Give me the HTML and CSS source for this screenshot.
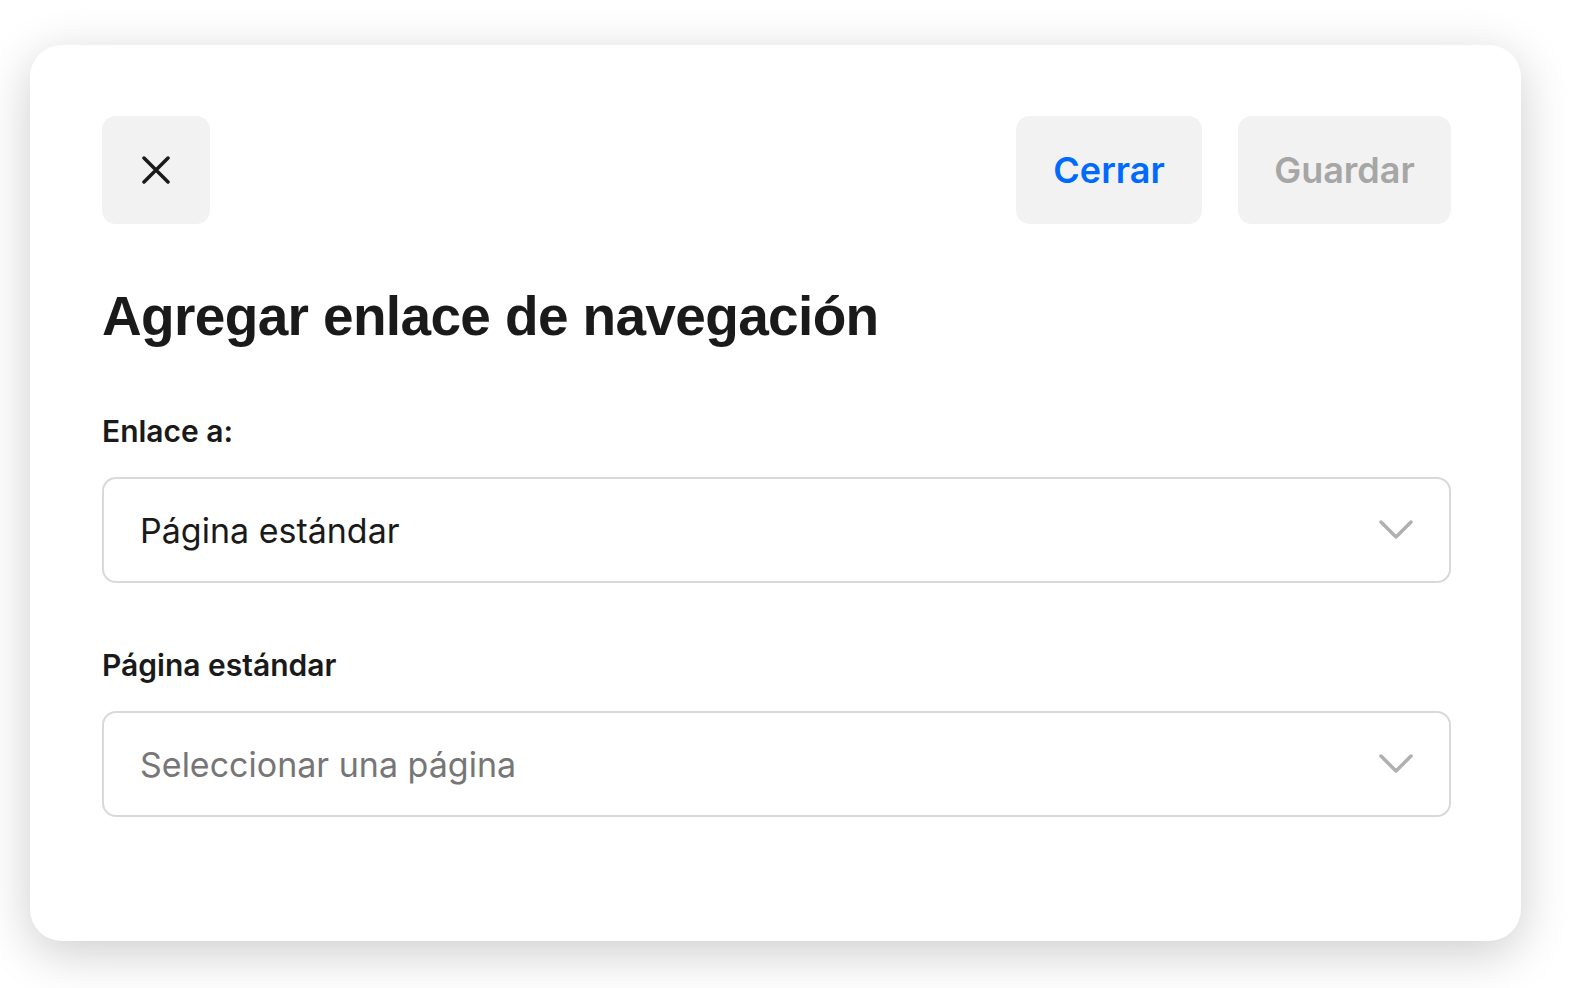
FILE: index.html
```html
<!DOCTYPE html>
<html lang="es">
<head>
    <meta charset="UTF-8">
    <meta name="viewport" content="width=device-width, initial-scale=1.0">
    <title>Agregar enlace de navegación</title>
    <link rel="stylesheet" href="styles.css">
</head>
<body>
    <div class="page">
        <div class="dialog">
            <div class="dialog-header">
                <button type="button" class="btn btn-icon" aria-label="Cerrar">
                    <svg width="28" height="28" viewBox="0 0 28 28" fill="none" stroke="#1a1a1a" stroke-width="3.5" stroke-linecap="round">
                        <path d="M2 2L26 26M26 2L2 26"/>
                    </svg>
                </button>
                <div class="actions">
                    <button type="button" class="btn btn-text btn-primary">Cerrar</button>
                    <button type="button" class="btn btn-text btn-disabled">Guardar</button>
                </div>
            </div>

            <h1 class="title">Agregar enlace de navegación</h1>

            <div class="field">
                <label class="field-label">Enlace a:</label>
                <div class="select">
                    <span class="select-value">Página estándar</span>
                    <svg class="chevron" width="34" height="20" viewBox="0 0 34 20" fill="none" stroke="#b0b0b0" stroke-width="3.5" stroke-linecap="round" stroke-linejoin="round">
                        <path d="M2 2L17 17L32 2"/>
                    </svg>
                </div>
            </div>

            <div class="field">
                <label class="field-label">Página estándar</label>
                <div class="select">
                    <span class="select-value placeholder">Seleccionar una página</span>
                    <svg class="chevron" width="34" height="20" viewBox="0 0 34 20" fill="none" stroke="#b0b0b0" stroke-width="3.5" stroke-linecap="round" stroke-linejoin="round">
                        <path d="M2 2L17 17L32 2"/>
                    </svg>
                </div>
            </div>
        </div>
    </div>
</body>
</html>
```

FILE: styles.css
```css
body {
    margin: 0;
    background-color: #ffffff;
    font-family: Inter, "Noto Sans", Arial, sans-serif;
    color: #1a1a1a;
}
.page {
    padding: 45px 61px 47px 30px;
}
.dialog {
    background: white;
    border-radius: 32px;
    box-shadow: 0 12px 50px rgba(0, 0, 0, 0.2);
    height: 896px;
    box-sizing: border-box;
    padding: 71px 70px 0 72px;
}
.dialog-header {
    display: flex;
    justify-content: space-between;
    align-items: center;
}
.actions {
    display: flex;
    gap: 36px;
}
.btn {
    border: none;
    background-color: #f2f2f2;
    border-radius: 14px;
    height: 108px;
    font-family: Inter, "Noto Sans", Arial, sans-serif;
    cursor: pointer;
}
.btn-icon {
    width: 108px;
    display: flex;
    align-items: center;
    justify-content: center;
    padding: 0;
}
.btn-text {
    font-size: 36px;
    font-weight: 600;
    padding: 0;
}
.btn-primary {
    color: #006aff;
    width: 186px;
}
.btn-disabled {
    color: #a6a6a6;
    width: 213px;
    cursor: default;
}
.title {
    font-family: "Liberation Sans", Arial, sans-serif;
    font-size: 55px;
    font-weight: 700;
    letter-spacing: -0.65px;
    line-height: 64px;
    margin: 60px 0 0 0;
}
.field {
    margin-top: 65px;
}
.field + .field {
    margin-top: 64px;
}
.field-label {
    display: block;
    font-size: 30px;
    font-weight: 600;
    line-height: 36px;
}
.select {
    margin-top: 28px;
    height: 106px;
    box-sizing: border-box;
    border: 2px solid #d9d9d9;
    border-radius: 14px;
    display: flex;
    align-items: center;
    justify-content: space-between;
    padding: 0 36px;
}
.select-value {
    font-size: 34px;
}
.placeholder {
    color: #767676;
}
```
